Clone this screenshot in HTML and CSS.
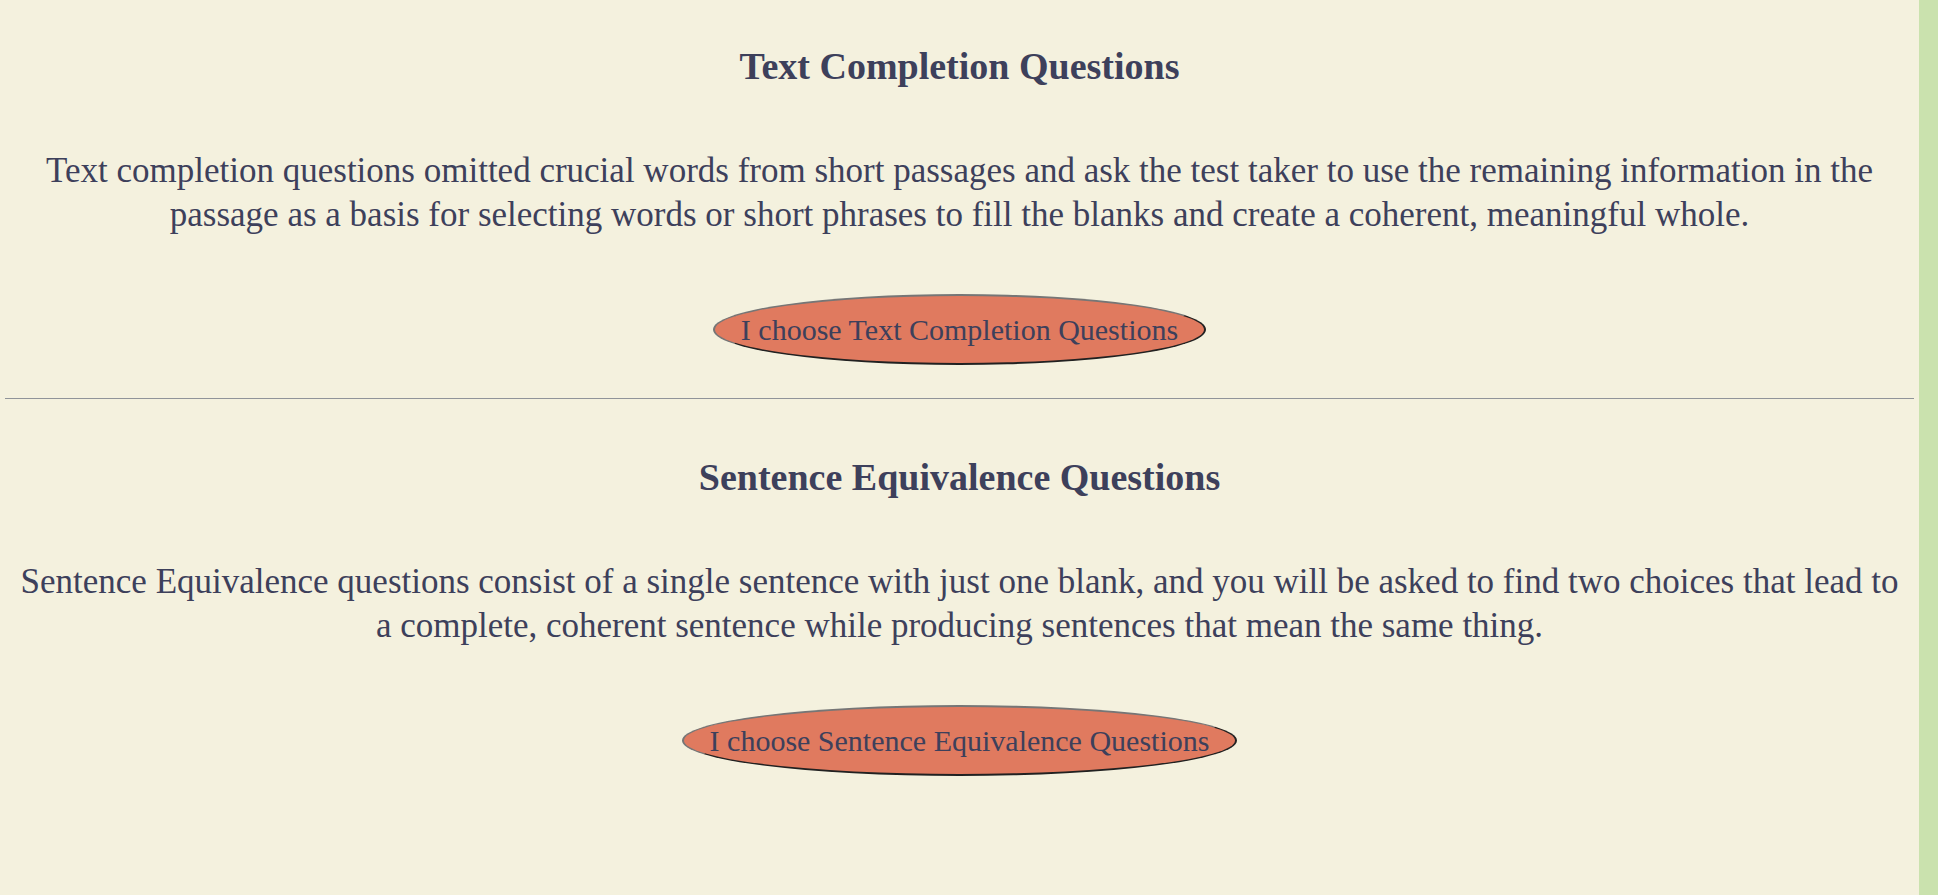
FILE: index.html
```html
<!DOCTYPE html>
<html lang="en">
<head>
<meta charset="utf-8">
<title>Verbal Questions</title>
<link rel="stylesheet" href="styles.css">
</head>
<body>
<main class="page">
<section class="topic">
<h2 class="topic-title">Text Completion Questions</h2>
<p class="topic-text">Text completion questions omitted crucial words from short passages and ask the test taker to use the remaining information in the passage as a basis for selecting words or short phrases to fill the blanks and create a coherent, meaningful whole.</p>
<button class="choose" type="button">I choose Text Completion Questions</button>
</section>
<hr class="divider">
<section class="topic">
<h2 class="topic-title">Sentence Equivalence Questions</h2>
<p class="topic-text">Sentence Equivalence questions consist of a single sentence with just one blank, and you will be asked to find two choices that lead to a complete, coherent sentence while producing sentences that mean the same thing.</p>
<button class="choose" type="button">I choose Sentence Equivalence Questions</button>
</section>
</main>
</body>
</html>
```
FILE: styles.css
```css
* {
  box-sizing: border-box;
}

body {
  margin: 0;
  background: #cae2ae;
  font-family: "Liberation Serif", "Times New Roman", serif;
  color: #3d405b;
}

.page {
  min-height: 100vh;
  margin-right: 19px;
  padding: 0 5px;
  background: #f4f1de;
}

.topic {
  display: flex;
  flex-direction: column;
  align-items: center;
  padding: 44px 0 33px;
  text-align: center;
}

.topic-title {
  margin: 0;
  font-size: 38px;
  line-height: 44px;
}

.topic-text {
  margin: 61px 0 57px;
  padding: 0 8px;
  font-size: 35px;
  line-height: 44px;
}

.choose {
  padding: 16px 26px;
  border: 2px solid;
  border-color: #767676 #212121 #212121 #767676;
  border-radius: 50%;
  background: #e07a5f;
  color: #3d405b;
  font-family: inherit;
  font-size: 30px;
  line-height: 35px;
}

.divider {
  margin: 0 0 12px;
  border: 0;
  border-top: 1px solid #909499;
}
```
